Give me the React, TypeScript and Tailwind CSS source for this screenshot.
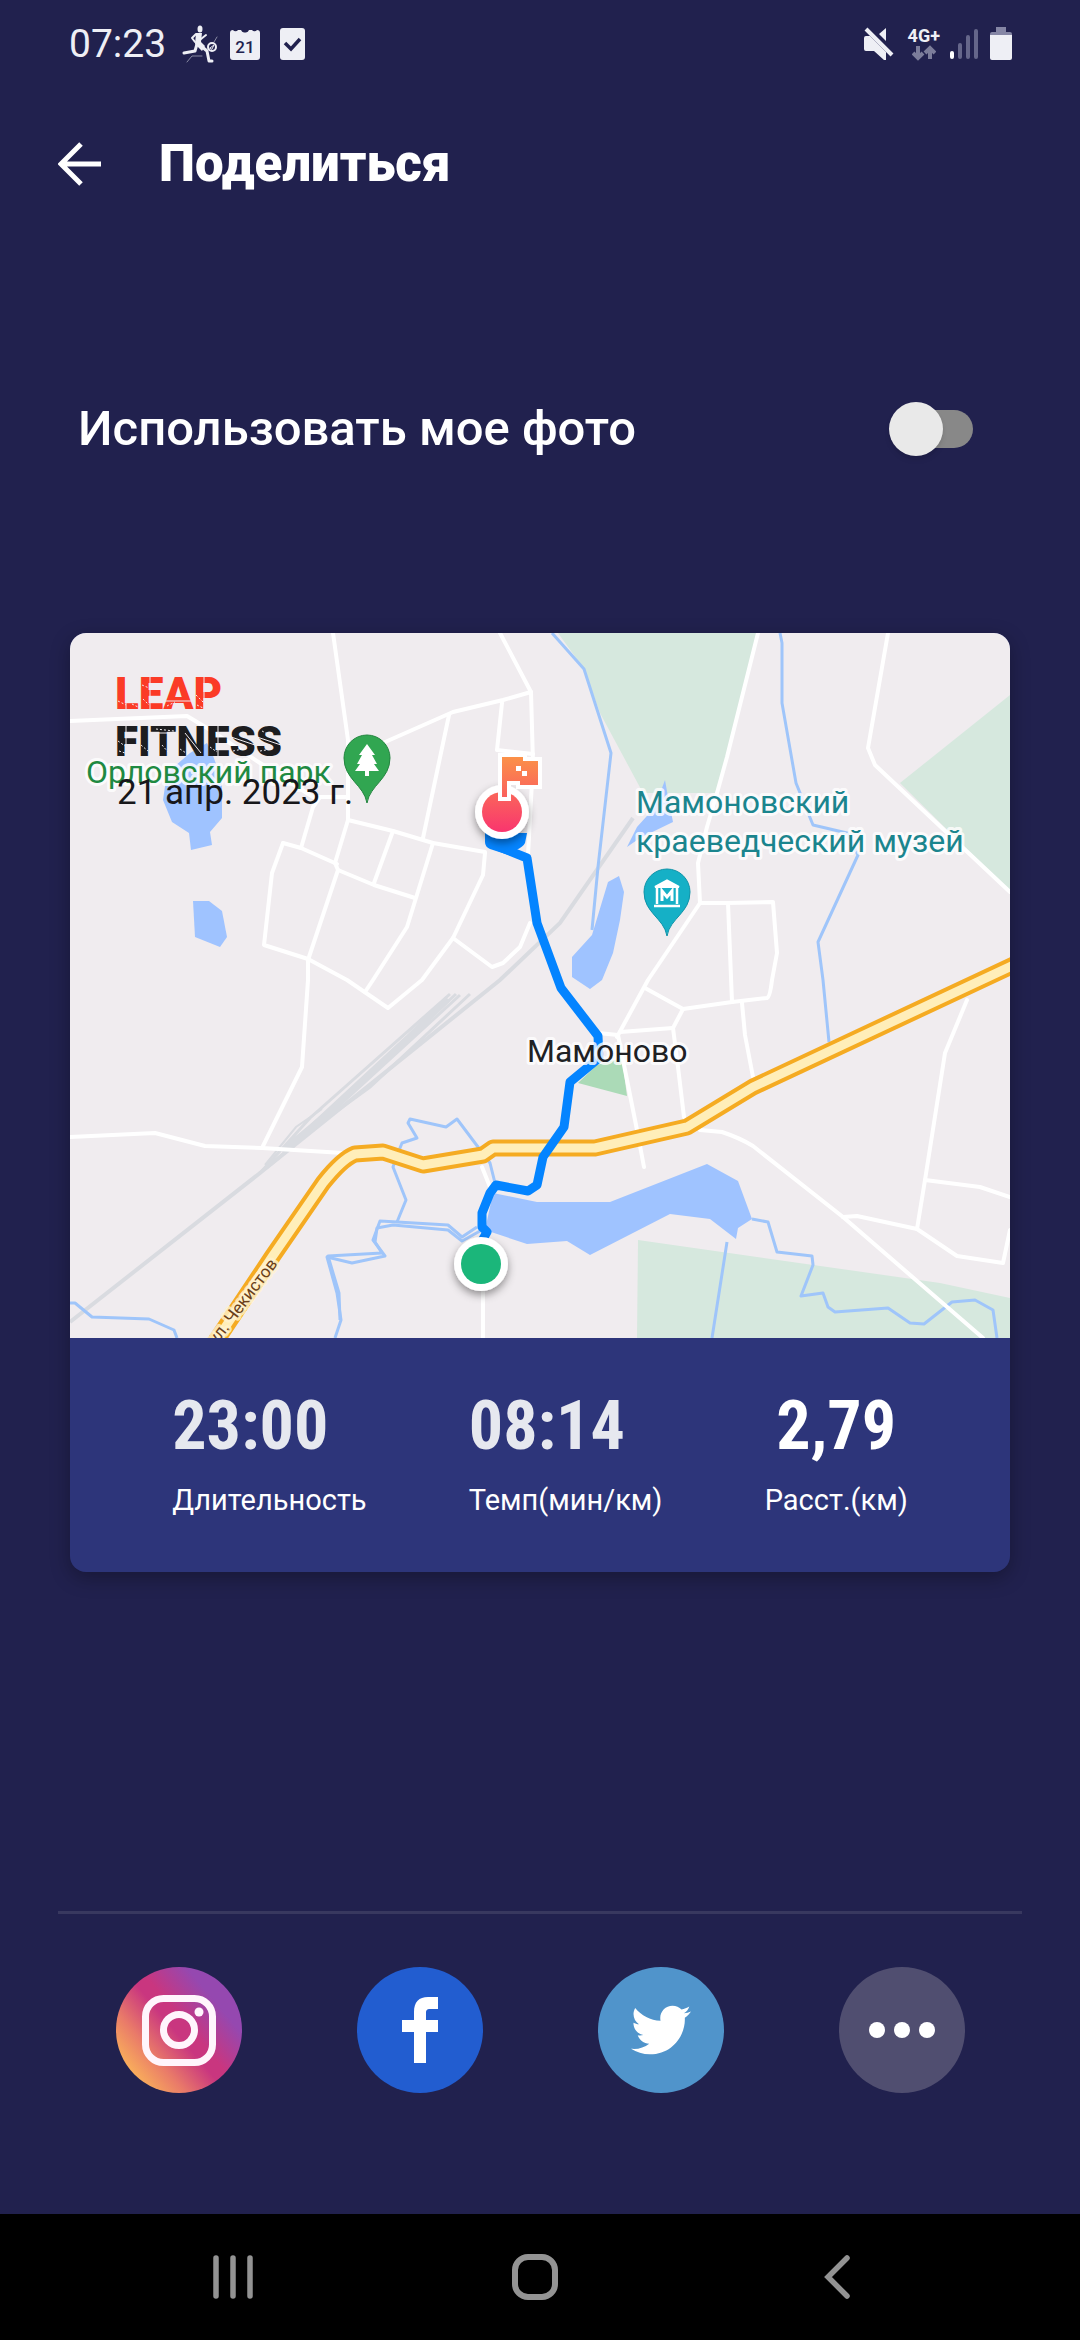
import { useState } from 'react'
import { FaTwitter } from 'react-icons/fa'

const stats = [
  { label: 'Длительность', value: '23:00', className: 'items-start text-[#e6e8ef]' },
  { label: 'Темп(мин/км)', value: '08:14', className: 'items-start text-[#e6e8ef]' },
  { label: 'Расст.(км)', value: '2,79', className: 'items-center text-white' },
]

const roads = [
  'M263 0L278 107V187L265 230L268 237L238 327V347L232 434L192 515',
  'M0 88L117 83L137 95L190 130L243 164H278',
  'M250 164L243 174L231 215',
  'M430 0L461 59L463 130L458 222',
  'M461 59L433 67L383 79L297 117',
  'M379 82L353 205',
  'M432 70L427 117L463 121',
  'M278 187L323 198L363 210L415 219',
  'M323 198L304 250',
  'M213 210L231 215L267 231M268 237L304 252L345 265',
  'M213 210L202 240L194 312L238 326L277 347L318 375L352 347L383 305L413 242L415 220',
  'M363 210L337 294L303 347L295 359',
  'M383 305L422 334L433 330L450 314L460 290',
  'M0 504L85 500L135 513L192 515L273 520',
  'M688 0L657 124L647 160L637 194L628 230L630 270L578 347L547 404',
  'M630 270H657L703 269L707 320L702 347Q700 364 697 365L662 369L613 376L575 355',
  'M658 270L662 369',
  'M613 376L603 395L608 434L614 484',
  'M550 399L603 395',
  'M672 370L675 402L683 444',
  'M510 378L528 400L548 402L555 437L567 497L574 534',
  'M630 497L652 499Q670 505 683 513L773 584L913 705',
  'M773 584L787 583L847 596L887 623L933 630L940 597',
  'M847 596L855 547L875 420L897 367',
  'M855 547L910 554L940 564',
  'M818 0L798 115L805 132L940 259',
  'M413 657V705',
  'M412 534L420 554',
]

const rivers = [
  'M482 0L514 36L541 120L528 234L522 297',
  'M710 0L712 10V70L726 150L743 192L777 200L788 222L748 309L753 347L759 409',
  'M682 586L698 589L707 619L742 623L743 632L731 663L753 660L758 674L765 679L818 675L840 690L854 691L882 669L905 667L923 677L927 705',
  'M657 609L642 705',
  'M425 550L420 530L387 486L376 494L340 486L338 490L347 505L332 510L328 520L323 534L336 567L327 589',
  'M407 594L392 604L378 592L310 588L303 607L315 623L282 630L257 624L267 660L271 687L265 705',
  'M410 598L392 608L378 597L323 592L307 595L305 609L312 620L258 623L269 660L270 687',
  'M0 670H5L22 684L79 686L104 697L107 705',
]

const lakes = [
  'M120 120L137 110L142 120L152 147V185L140 199L142 212L121 217L119 200L102 189L93 167L97 140Z',
  'M123 268H139L152 278L157 304L150 314L125 304Z',
  'M538 249L549 243L554 259L550 287L543 320L532 347L520 356L502 344V324L522 302Z',
  'M595 147L598 164L603 189L570 205L557 214L567 194L585 174Z',
  'M423 560L467 569H540L637 531L668 548L682 586L668 595L666 606L640 586L600 581L520 622L497 608L457 611L415 597Z',
]

const highway =
  'M140 717L202 624L253 550Q272 526 285 521L313 519L353 532L413 522L423 515H525L617 494L683 454L950 329'

const route =
  'M425 212L457 225L467 290L491 355L528 403L529 425L500 449L494 494L473 524L467 552L458 558L426 552L420 560L412 580V594L417 599L413 606'

function RouteMap() {
  return (
    <svg viewBox="0 0 940 705" className="block w-full" role="img" aria-label="Маршрут пробежки">
      <defs>
        <linearGradient id="finish" gradientUnits="userSpaceOnUse" x1="0" y1="124" x2="0" y2="200">
          <stop offset="0" stopColor="#fb9148" />
          <stop offset="1" stopColor="#f9346f" />
        </linearGradient>
        <filter id="drop" x="-50%" y="-50%" width="200%" height="200%">
          <feDropShadow dx="0" dy="4" stdDeviation="4" floodOpacity="0.4" />
        </filter>
      </defs>
      <rect width="940" height="705" fill="#f0ecef" />

      {/* forests */}
      <g fill="#d6e8de">
        <path d="M488 0L514 36L530 80L573 160H647L688 0Z" />
        <path d="M940 62L830 150L940 259Z" />
        <path d="M568 607L870 650L940 665V705H567Z" />
      </g>
      <path d="M508 450L527 432L552 425L557 463Z" fill="#abdab7" />

      {/* railway */}
      <g fill="none" stroke="#d9dbe0">
        <path d="M0 689L190 540L430 347L490 290L563 185" strokeWidth="4" />
        <path d="M190 540L240 485L380 361M215 514L262 475L386 361M195 536L250 490L390 362M212 518L300 454L400 361" strokeWidth="3" />
        <path d="M230 505L300 440L340 403L378 366" strokeWidth="6" />
        <path d="M195 532L226 494L252 476" strokeWidth="2" />
      </g>

      <g fill="#9fc3ff">
        {lakes.map((d) => <path key={d} d={d} />)}
      </g>
      <g fill="none" stroke="#9fc5fa" strokeWidth="3" strokeLinejoin="round">
        {rivers.map((d) => <path key={d} d={d} />)}
      </g>
      <g fill="none" stroke="#fff" strokeWidth="4" strokeLinejoin="round" strokeLinecap="round">
        {roads.map((d) => <path key={d} d={d} />)}
      </g>

      <g fill="none" strokeLinejoin="round">
        <path d={highway} stroke="#f5ab22" strokeWidth="17" />
        <path d={highway} stroke="#ffeeb9" strokeWidth="9" />
      </g>

      <path d={route} fill="none" stroke="#0484ff" strokeWidth="9" strokeLinejoin="round" strokeLinecap="round" />
      <path d="M415 200H457L455 210Q453 214 446 217L457 228L420 216Q415 214 415 209Z" fill="#0484ff" />

      {/* place pins */}
      <path d="M297 170C294 152 274 146 274 125A23 23 0 0 1 320 125C320 146 300 152 297 170Z" fill="#31a651" stroke="#23853f" />
      <path d="M297 111L305 122H302L307 131H304L309 138H299V143H295V138H285L290 131H287L292 122H289Z" fill="#fff" />
      <path d="M597 303C594 285 574 280 574 259A23 23 0 0 1 620 259C620 280 600 285 597 303Z" fill="#15b0c6" stroke="#0f93a8" />
      <g fill="none" stroke="#fff">
        <path d="M585 254L597 247.500L609 254Z" fill="#fff" strokeWidth="2" />
        <path d="M587 255V271M607 255V271M584 273H610" strokeWidth="2.500" />
        <path d="M592 268V258L597 264L602 258V268" strokeWidth="3" />
      </g>

      {/* place names */}
      <g fontSize="32" stroke="#fff" strokeOpacity="0.8" strokeWidth="6" strokeLinejoin="round" className="[paint-order:stroke]">
        <text x="16" y="150" fill="#1f8a42">Орловский парк</text>
        <text x="566" y="180" fill="#1b858e">Мамоновский</text>
        <text x="566" y="219" fill="#1b858e">краеведческий музей</text>
        <text x="457" y="429" fill="#202124">Мамоново</text>
        <text x="208" y="631" fontSize="17" textAnchor="end" transform="rotate(-53 208 631)" fill="#6b4019" stroke="#fff3d0">
          ул. Чекистов
        </text>
      </g>

      {/* start and finish */}
      <g filter="url(#drop)">
        <circle cx="411" cy="631" r="27" fill="#fff" />
        <circle cx="432" cy="179" r="27" fill="#fff" />
      </g>
      <circle cx="411" cy="631" r="20" fill="#1bb67a" />
      <circle cx="432" cy="179" r="20" fill="url(#finish)" />
      <path
        d="M432 124H453V128H468V152H450V148H437V164H432Z"
        fill="url(#finish)"
        stroke="#fff"
        strokeWidth="8"
        className="[paint-order:stroke]"
      />
      <path d="M446 133h5v5h-5zM452 138h5v5h-5z" fill="#fff" />

      {/* brand and date */}
      <g fontWeight="900">
        <text x="45" y="76" fontSize="44" fill="#fb3b26">LEAP</text>
        <text x="45" y="123" fontSize="42" fill="#1d1d1f">FITNESS</text>
      </g>
      {/* stencil cuts and wear */}
      <g fill="none" stroke="#f0ecef">
        <path d="M56 44V77M80 44V77M134 44V77M94 68H123" strokeWidth="1" />
        <path d="M56 92V124M80 100H108M115 100L131 120M148 92V124M161 104L185 112M187 104L211 112" strokeWidth="1" />
        <path d="M48 68l8 4M62 71l6 3M72 52l7 3M73 66l6 6M97 73l8-4M126 62l8 8M127 72l6 3" strokeWidth="1" strokeDasharray="2 2" />
        <path d="M48 108l7 5M49 118l6 2M71 112l7 6M86 96l18 2M92 112l6 7M110 116l6 4M140 114l7 5M163 118l10-2M190 118l12-2M192 98l6 3" strokeWidth="1" strokeDasharray="2 2" />
      </g>
      <text x="47" y="171" fontSize="35" fill="#17171a">21 апр. 2023 г.</text>
    </svg>
  )
}

function StatusBar() {
  return (
    <div className="flex h-[88px] items-center justify-between pr-[68px] pl-[69px] text-[#eeeff5]">
      <div className="flex items-center">
        <span className="text-[39px] leading-none">07:23</span>
        <svg width="36" height="38" viewBox="0 0 36 38" className="ml-4" fill="none" stroke="currentColor" strokeLinecap="round" strokeLinejoin="round">
          <ellipse cx="18" cy="4" rx="2.500" ry="3.500" fill="currentColor" stroke="none" />
          <path d="M14 8H20L19 17L23 21L20 26L13 19Z" fill="currentColor" stroke="none" />
          <path d="M14 9L10 13L13 17M19 14L24 10" strokeWidth="2" />
          <path d="M15 19L13 26L2 28M18 20L25 26L27 36H30" strokeWidth="3" />
          <circle cx="30" cy="22" r="4" strokeWidth="2" />
          <path d="M28 23l4-3-2 4z" strokeWidth="1" />
          <path d="M32 17L35 12M5 37L10 31H20" strokeWidth="1" opacity="0.5" />
        </svg>
        <svg width="30" height="31" viewBox="0 0 30 31" className="ml-3">
          <path d="M3 1a3 3 0 0 0 5 0h3a4 4 0 0 0 3 2.500h2a4 4 0 0 0 3-2.500h3a3 3 0 0 0 5 0a3 3 0 0 1 3 3v24a3 3 0 0 1-3 3H3a3 3 0 0 1-3-3V4a3 3 0 0 1 3-3z" fill="currentColor" />
          <text x="15" y="24" fontSize="17" fontWeight="500" textAnchor="middle" fill="#21214e">21</text>
        </svg>
        <svg width="25" height="32" viewBox="0 0 25 32" className="ml-5">
          <rect width="25" height="32" rx="3" fill="currentColor" />
          <path d="M5 15L11 21L20 11" fill="none" stroke="#21214e" strokeWidth="3.500" />
        </svg>
      </div>
      <div className="flex items-center">
        <svg width="30" height="34" viewBox="0 0 30 34" fill="currentColor">
          <path d="M0 11a2 2 0 0 1 2-2H6L22 25V33H20L10 24H2a2 2 0 0 1-2-2zM15 7L22 1V14Z" />
          <path d="M2 2L28 28" stroke="currentColor" strokeWidth="4" />
        </svg>
        <div className="ml-[14px] flex flex-col items-center">
          <span className="text-[18px] leading-[18px] font-bold">4G+</span>
          <svg width="24" height="16" viewBox="0 0 24 16" fill="none" stroke="#7c7d9a" strokeWidth="4">
            <path d="M6 1V13M1 8L6 13L11 8M18 14V3M13 8L18 3L23 8" />
          </svg>
        </div>
        <svg width="28" height="32" viewBox="0 0 28 32" className="ml-[10px]" stroke="#65668a" strokeWidth="4" strokeLinecap="round">
          <path d="M2 25V29" stroke="#fff" />
          <path d="M10 17V29M18 9V29M26 3V29" />
        </svg>
        <svg width="22" height="34" viewBox="0 0 22 34" className="ml-3">
          <path d="M6 0H16V5H20a2 2 0 0 1 2 2V12H0V7a2 2 0 0 1 2-2H6Z" fill="#8586a5" />
          <path d="M0 8H22V31a2 2 0 0 1-2 2H2a2 2 0 0 1-2-2Z" fill="currentColor" />
        </svg>
      </div>
    </div>
  )
}

export default function App() {
  const [usePhoto, setUsePhoto] = useState(false)

  return (
    <div className="flex min-h-screen flex-col bg-[#21214e] font-[Roboto,'Noto_Sans',sans-serif] text-white">
      <StatusBar />

      <header className="flex h-[152px] items-center gap-[58px] px-[58px]">
        <button type="button" aria-label="Назад">
          <svg width="43" height="44" viewBox="0 0 43 44" fill="none" stroke="currentColor" strokeWidth="5">
            <path d="M43 22H4M23 2L3 22L23 42" />
          </svg>
        </button>
        <h1 className="text-[51px] leading-[60px] font-black">Поделиться</h1>
      </header>

      <label className="mt-[149px] flex h-20 items-center justify-between pr-[107px] pl-[78px]">
        <span className="text-[49px] leading-[56px] font-medium">Использовать мое фото</span>
        <span className="relative flex h-[54px] w-[84px] items-center">
          <input
            type="checkbox"
            role="switch"
            checked={usePhoto}
            onChange={(e) => setUsePhoto(e.target.checked)}
            className="peer ml-1 h-[38px] w-20 appearance-none rounded-full bg-[#888] checked:bg-[#4f6bd8]"
          />
          <span className="pointer-events-none absolute left-0 size-[54px] rounded-full bg-[#e9e9e9] shadow-md peer-checked:left-[30px]" />
        </span>
      </label>

      <section className="mx-[70px] mt-[164px] overflow-hidden rounded-2xl bg-[#2d357a] shadow-[0_6px_20px_rgba(0,0,0,0.3)]">
        <RouteMap />
        <dl className="flex h-[234px] justify-evenly pt-12">
          {stats.map((stat) => (
            <div key={stat.label} className={`flex flex-col-reverse justify-end gap-4 ${stat.className}`}>
              <dt className="text-[29px] leading-9 text-white">{stat.label}</dt>
              <dd className="font-['Liberation_Sans_Narrow','Roboto_Condensed',Roboto,sans-serif] text-[68px] leading-[80px] font-bold">{stat.value}</dd>
            </div>
          ))}
        </dl>
      </section>

      <footer className="mx-[58px] mt-auto mb-[121px] border-t-[3px] border-[#38385f] pt-[53px]">
        <div className="flex justify-around">
          <button
            type="button"
            aria-label="Instagram"
            className="flex size-[126px] items-center justify-center rounded-full bg-[linear-gradient(50deg,#fbb559_12%,#e97a69_30%,#c9367f_48%,#c9367f_55%,#9548b0_76%)]"
          >
            <svg width="74" height="72" viewBox="0 0 74 72" fill="none" stroke="#fff5fc" strokeWidth="7">
              <rect x="3.500" y="4.500" width="67" height="64" rx="18" />
              <circle cx="37" cy="36" r="15.500" />
              <circle cx="57" cy="18" r="4.500" fill="#fff5fc" stroke="none" />
            </svg>
          </button>
          <button type="button" aria-label="Facebook" className="flex size-[126px] items-center justify-center rounded-full bg-[#225dd0]">
            <svg width="36" height="66" viewBox="0 0 36 66" fill="#fff">
              <path d="M12 66V35H0V23H12V15C12 5 17 0 26 0H36V12H28C25 12 24 13 24 16V23H36V35H24V66Z" />
            </svg>
          </button>
          <button type="button" aria-label="Twitter" className="flex size-[126px] items-center justify-center rounded-full bg-[#5094cb]">
            <FaTwitter size={60} />
          </button>
          <button type="button" aria-label="Ещё" className="flex size-[126px] items-center justify-center gap-[9px] rounded-full bg-[#504e70]">
            <span className="size-4 rounded-full bg-white" />
            <span className="size-4 rounded-full bg-white" />
            <span className="size-4 rounded-full bg-white" />
          </button>
        </div>
      </footer>

      <nav className="grid h-[126px] grid-cols-3 place-items-center bg-black pr-[92px] pl-[82px] text-[#939393]">
        <button type="button" aria-label="Недавние приложения">
          <svg width="40" height="44" viewBox="0 0 40 44" stroke="currentColor" strokeWidth="5.500" strokeLinecap="round">
            <path d="M3 3V41M20 3V41M37 3V41" />
          </svg>
        </button>
        <button type="button" aria-label="Домой">
          <svg width="48" height="48" viewBox="0 0 48 48" fill="none" stroke="currentColor" strokeWidth="6">
            <rect x="4" y="4" width="40" height="40" rx="13" />
          </svg>
        </button>
        <button type="button" aria-label="Назад">
          <svg width="26" height="44" viewBox="0 0 26 44" fill="none" stroke="currentColor" strokeWidth="5.500" strokeLinecap="round">
            <path d="M23 3L4 22L23 41" />
          </svg>
        </button>
      </nav>
    </div>
  )
}
